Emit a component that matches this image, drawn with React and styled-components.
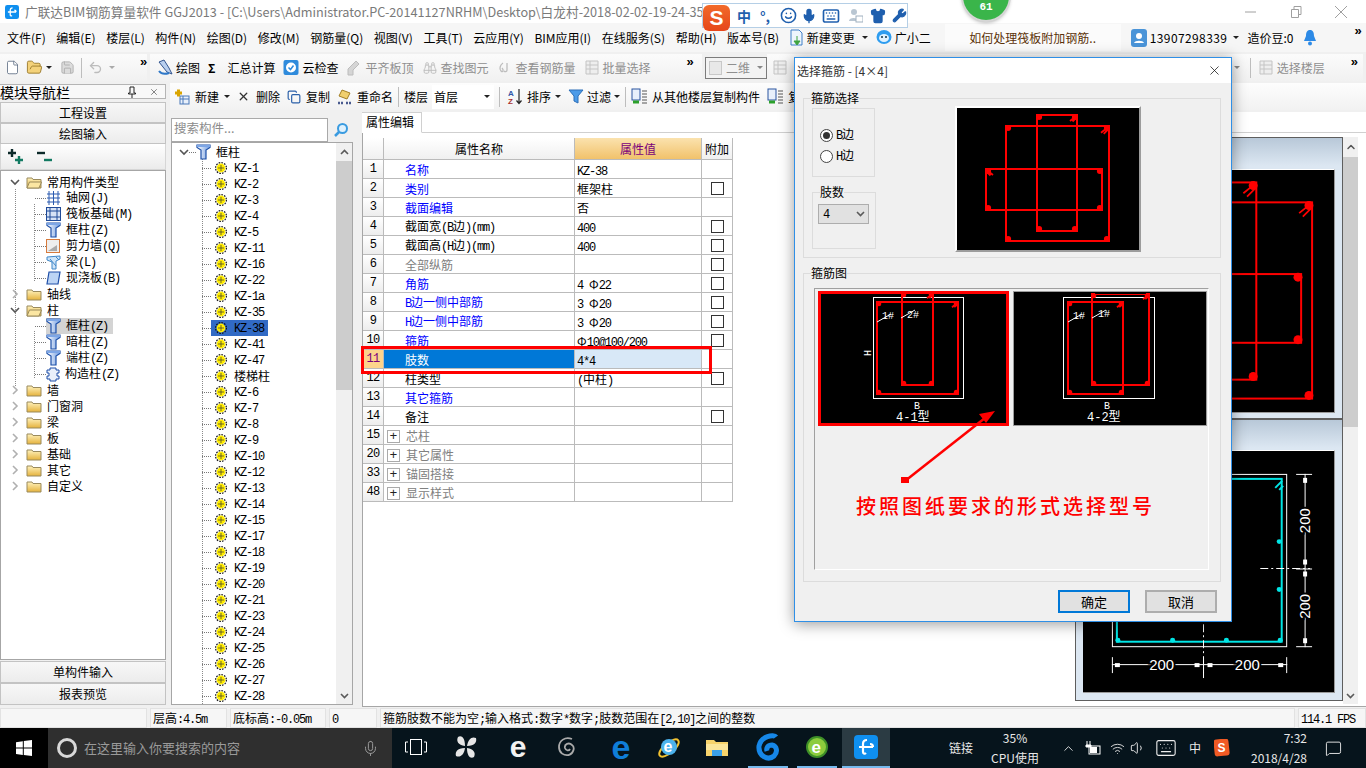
import React from "react";
import styled, { createGlobalStyle } from "styled-components";
import { Binoculars, Copy, File, FolderOpen, Mic, Save, Undo2, Wifi, Volume1, X, Keyboard, Wrench, Shirt, Smile, ChevronUp, MessageSquare } from "lucide-react";

const GlobalStyle = createGlobalStyle`
  html, body { margin: 0; padding: 0; background: #f0f0f0; }
  * { box-sizing: border-box; }
  svg { flex: none; }
`;

const CJK = `"Noto Sans CJK SC", "Liberation Sans", sans-serif`;

const Root = styled.div`
  position: relative;
  width: 1366px;
  height: 768px;
  overflow: hidden;
  display: flex;
  flex-direction: column;
  background: #f0f0f0;
  font-family: ${CJK};
  font-size: 12px;
  line-height: 16px;
  color: #000;
`;

const Latin = styled.span`
  font-family: "Liberation Mono", monospace;
  font-size: 12px;
  letter-spacing: -1.2px;
`;

// SimSun-like mixed text: ascii runs go in the mono face
const sim = (s) => s.split(/([\x20-\x7e]+)/).map((p, i) => (i % 2 ? <Latin key={i}>{p}</Latin> : p));

/* ---------- window chrome ---------- */
const TitleBar = styled.div`
  height: 23px;
  background: #fff;
  display: flex;
  align-items: center;
  padding-left: 5px;
  gap: 6px;
  color: #7a7a7a;
  white-space: nowrap;
  overflow: hidden;
`;
const TitleText = styled.span`
  flex: 1;
  font-size: 12.7px;
`;
const WinBtns = styled.div`
  display: flex;
  align-items: center;
  width: 104px;
  margin-right: 18px;
  justify-content: space-between;
  flex: none;
  background: #fff;
`;
const MenuBar = styled.div`
  height: 29px;
  background: #f6f6f6;
  display: flex;
  align-items: center;
  padding-left: 7px;
  white-space: nowrap;
`;
const Menu = styled.span`
  margin-right: ${(p) => p.$mr ?? 10.6}px;
  display: inline-flex;
  align-items: center;
  gap: 3px;
`;
const Phone = styled.span`
  letter-spacing: 0.4px;
`;
const Notice = styled.div`
  width: 176px;
  height: 27px;
  margin: 0 10px 0 -1px;
  background: #fbfbfb;
  color: #5b3208;
  text-align: center;
  line-height: 27px;
  flex: none;
`;
const TopRow = styled.div`
  height: 31px;
  display: flex;
  align-items: center;
  background: #f0f0f0;
  white-space: nowrap;
  overflow: hidden;
`;
const Strip = styled.div`
  display: flex;
  align-items: center;
  height: 27px;
  gap: ${(p) => p.$gap ?? 8}px;
  padding-left: ${(p) => p.$pl ?? 4}px;
  padding-right: ${(p) => p.$pr ?? 0}px;
  width: ${(p) => p.$w}px;
  flex: ${(p) => (p.$w ? "none" : 1)};
  background: linear-gradient(#fbfbfb, #f1f1f1);
  margin-right: 3px;
`;
const Spacer = styled.i`
  flex: 1;
`;
const Tool = styled.span`
  display: inline-flex;
  align-items: center;
  gap: ${(p) => p.$gap ?? 3}px;
  color: ${(p) => (p.$off ? "#8f8f8f" : "#000")};
  flex: none;
`;
const IconSlot = styled.span`
  width: 16px;
  display: inline-flex;
  justify-content: center;
  flex: none;
`;
const Caret = styled.i`
  display: inline-block;
  width: 0;
  height: 0;
  border: 3px solid transparent;
  border-top: 3px solid ${(p) => p.$c ?? "#222"};
  border-bottom: 0;
  margin: 0 ${(p) => p.$m ?? 2}px;
`;
const More = styled.span`
  font-family: "Liberation Sans", sans-serif;
  font-weight: 700;
  font-size: 13px;
  line-height: 10px;
  margin-left: ${(p) => p.$ml ?? 0}px;
  align-self: flex-start;
  margin-top: 3px;
`;
const Sep = styled.i`
  width: 1px;
  height: 20px;
  background: #bdbdbd;
  flex: none;
  margin: 0 ${(p) => p.$m ?? 0}px;
`;
const ViewSelect = styled.div`
  width: 62px;
  height: 22px;
  border: 1px solid #7c7c7c;
  display: flex;
  align-items: center;
  gap: 4px;
  padding-left: 3px;
  color: #8f8f8f;
  flex: none;
  background: #f3f3f3;
`;
const ViewSwatch = styled.i`
  width: 14px;
  height: 14px;
  border: 1px solid #c8c8c8;
  background: #e8e8e8;
`;

/* ---------- body ---------- */
const Body = styled.div`
  height: 624px;
  display: flex;
`;
const Sidebar = styled.div`
  width: 170px;
  flex: none;
  display: flex;
  flex-direction: column;
  padding: 1px 4px 2px 0;
`;
const NavHead = styled.div`
  height: 15px;
  border: 1px solid #b4b4b4;
  border-left: 0;
  display: flex;
  align-items: center;
  justify-content: space-between;
  padding-right: 6px;
  font-size: 14px;
  line-height: 14px;
  background: #f8f8f8;
  margin-bottom: 3px;
`;
const NavPins = styled.span`
  display: flex;
  align-items: center;
  gap: 13px;
  color: #222;
`;
const NavBtn = styled.div`
  height: ${(p) => p.$h ?? 21}px;
  border: 1px solid #c3c3c3;
  background: linear-gradient(#f7f7f7, #ececec);
  text-align: center;
  line-height: 20px;
  flex: none;
`;
const NavTools = styled.div`
  height: 26px;
  flex: none;
  display: flex;
  align-items: center;
  gap: 12px;
  padding-left: 6px;
  background: linear-gradient(#fff, #ebebeb);
  border: 1px solid #d6d6d6;
  border-top: 0;
`;

const dotted = (x, top, h) =>
  `repeating-linear-gradient(to bottom, #8a8a8a 0 1px, transparent 1px 2px) ${x}px ${top}px / 1px ${h}px no-repeat`;

const TreeBox = styled.div`
  flex: 1;
  background: ${dotted(14, 18, 198)}, ${dotted(33, 33, 78)}, ${dotted(33, 160, 48)}, #fff;
  border: 1px solid #a6a6a6;
  padding-top: 3px;
  margin-bottom: 1px;
  overflow: hidden;
`;
const TreeRow = styled.div`
  height: ${(p) => p.$h ?? 16}px;
  display: flex;
  align-items: center;
  white-space: nowrap;
  padding-left: ${(p) => p.$pl ?? 0}px;
`;
const Dash = styled.i`
  width: ${(p) => p.$w ?? 11}px;
  border-top: 1px dotted #777;
  flex: none;
`;
const Gap = styled.i`
  width: ${(p) => p.$w}px;
  flex: none;
`;
const TreeLabel = styled.span`
  margin-left: ${(p) => p.$ml ?? 5}px;
  line-height: 16px;
`;
const GroupSel = styled.span`
  display: inline-flex;
  align-items: center;
  height: 16px;
  padding-right: 5px;
  background: ${(p) => (p.$on ? "#d4d4d4" : "transparent")};
`;
const KzSel = styled.span`
  display: inline-flex;
  align-items: center;
  height: 16px;
  padding: 0 4px;
  background: ${(p) => (p.$on ? "#316ac5" : "transparent")};
`;

const Workspace = styled.div`
  flex: 1;
  display: flex;
  flex-direction: column;
  min-width: 0;
`;
const ToolRow2 = styled.div`
  height: 27px;
  flex: none;
  display: flex;
  align-items: center;
  padding-left: 4px;
  gap: 7px;
  background: linear-gradient(#fdfdfd, #f2f2f2);
  white-space: nowrap;
  overflow: hidden;
`;
const FloorSelect = styled.div`
  width: 62px;
  height: 24px;
  margin-left: -3px;
  background: #fff;
  display: flex;
  align-items: center;
  justify-content: space-between;
  padding: 0 2px 0 2px;
  flex: none;
`;
const Panes = styled.div`
  flex: 1;
  display: flex;
  min-height: 0;
`;
const CompPane = styled.div`
  width: 192px;
  flex: none;
  padding: 7px 9px 2px 1px;
  display: flex;
  flex-direction: column;
`;
const SearchRow = styled.div`
  height: 25px;
  flex: none;
  display: flex;
  align-items: center;
  gap: 5px;
`;
const SearchInput = styled.div`
  width: 157px;
  height: 24px;
  background: #fff;
  border: 1px solid #a9a9a9;
  color: #8c8c8c;
  padding-left: 2px;
  line-height: 17px;
  font-size: 12.5px;
`;
const CompList = styled.div`
  flex: 1;
  min-height: 0;
  display: flex;
  background: ${dotted(30, 16, 550)}, #fff;
  border: 1px solid #a6a6a6;
  overflow: hidden;
`;
const CompRows = styled.div`
  flex: 1;
  padding-top: 1px;
  overflow: hidden;
`;
const Scrollbar = styled.div`
  width: ${(p) => p.$w ?? 15}px;
  flex: none;
  display: flex;
  flex-direction: column;
  background: #f0f0f0;
`;
const ScrollEnd = styled.div`
  height: ${(p) => p.$h ?? 17}px;
  flex: none;
  display: flex;
  align-items: center;
  justify-content: center;
  color: #555;
`;
const ScrollThumb = styled.div`
  height: ${(p) => p.$h}px;
  flex: none;
  background: #cdcdcd;
`;
const ScrollTrack = styled.div`
  flex: 1;
`;

const PropPane = styled.div`
  flex: 1;
  min-width: 0;
  display: flex;
  flex-direction: column;
  padding-top: 2px;
`;
const TabRow = styled.div`
  height: 21px;
  flex: none;
  background: #fff;
  border-bottom: 1px solid #d0d0d0;
`;
const Tab = styled.div`
  width: 60px;
  height: 21px;
  background: #fff;
  border: 1px solid #d0d0d0;
  border-bottom: 1px solid #fff;
  border-left: 0;
  padding-left: 4px;
  line-height: 17px;
`;
const PropBody = styled.div`
  flex: 1;
  min-height: 0;
  display: flex;
  background: #fff;
  padding: 4px 8px 2px 0;
  border-left: 1px solid #a6a6a6;
  border-bottom: 1px solid #a6a6a6;
`;
const TableArea = styled.div`
  flex: 1;
  min-width: 0;
`;
const Table = styled.div`
  display: grid;
  width: 370px;
  margin-top: 1px;
  grid-template-columns: 21px 191px 127px 31px;
  grid-template-rows: 22px;
  grid-auto-rows: 19px;
`;
const HeadCell = styled.div`
  text-align: center;
  line-height: 21px;
  background: ${(p) => (p.$hot ? "linear-gradient(#fbe2ae, #f1c26b)" : "linear-gradient(#ffffff, #f0f0f0)")};
  color: ${(p) => (p.$hot ? "#7b007b" : "#000")};
  border-right: 1px solid #bbb;
  border-bottom: 1px solid #bbb;
`;
const NumCell = styled.div`
  text-align: center;
  font-family: "Liberation Mono", monospace;
  font-size: 12px;
  letter-spacing: -0.8px;
  line-height: 18px;
  background: ${(p) => (p.$sel ? "#fdd48c" : "linear-gradient(#fff, #ededed)")};
  color: ${(p) => (p.$sel ? "#7b007b" : "#000")};
  border-right: 1px solid #bbb;
  border-bottom: 1px solid #bbb;
`;
const NameCell = styled.div`
  padding: 2px 0 0 ${(p) => (p.$plus ? 3 : 21)}px;
  display: flex;
  align-items: center;
  gap: 6px;
  background: ${(p) => (p.$sel ? "#0078d7" : "#fff")};
  color: ${(p) => (p.$sel ? "#fff" : p.$c)};
  border-right: 1px solid #bbb;
  border-bottom: 1px solid #bbb;
  white-space: nowrap;
`;
const ValueCell = styled.div`
  padding-left: 2px;
  line-height: 19px;
  background: ${(p) => (p.$sel ? "#d8e8f7" : "#fff")};
  border-right: 1px solid #bbb;
  border-bottom: 1px solid #bbb;
  white-space: nowrap;
  overflow: hidden;
`;
const ExtraCell = styled.div`
  display: flex;
  align-items: center;
  justify-content: center;
  border-right: 1px solid #bbb;
  border-bottom: 1px solid #bbb;
`;
const CheckBox = styled.i`
  width: 13px;
  height: 13px;
  border: 1px solid #333;
  background: #fff;
`;
const PlusBox = styled.i`
  width: 13px;
  height: 13px;
  border: 1px solid #aaa;
  display: flex;
  align-items: center;
  justify-content: center;
  font-style: normal;
  font-family: "Liberation Mono", monospace;
  font-size: 13px;
  line-height: 11px;
  color: #222;
  flex: none;
`;
const Previews = styled.div`
  width: 268px;
  flex: none;
  display: flex;
  flex-direction: column;
`;
const Preview = styled.div`
  height: ${(p) => p.$h}px;
  flex: none;
  border: 1px solid #5e5e5e;
  background: linear-gradient(#b8c8d8 0, #dce7f2 28px, #dce7f2 100%);
  padding: ${(p) => p.$t}px 7px 0 7px;
`;
const Canvas = styled.div`
  width: 252px;
  height: ${(p) => p.$h}px;
  background: #000;
  border-top: 1px solid #fff;
  border-bottom: 1px solid #999;
  border-right: 1px solid #999;
`;
const Draw = styled.svg`
  display: block;
  width: 100%;
  height: 100%;
`;

/* ---------- status + taskbar ---------- */
const StatusBar = styled.div`
  height: 21px;
  flex: none;
  display: flex;
  gap: 3px;
  padding-top: 1px;
`;
const StatusCell = styled.div`
  width: ${(p) => p.$w}px;
  flex: ${(p) => (p.$w ? "none" : 1)};
  height: 20px;
  padding-left: 2px;
  background: #f6f6f6;
  border: 1px solid #e2e2e2;
  line-height: 18px;
  white-space: nowrap;
  overflow: hidden;
`;
const Taskbar = styled.div`
  height: 40px;
  flex: none;
  background: #06141c;
  display: flex;
  align-items: center;
  color: #e8e8e8;
  white-space: nowrap;
`;
const StartBtn = styled.div`
  width: 48px;
  height: 40px;
  background: #000;
  display: flex;
  align-items: center;
  justify-content: center;
  flex: none;
`;
const SearchBox = styled.div`
  width: 344px;
  height: 40px;
  background: #2f2f2f;
  display: flex;
  align-items: center;
  color: #9a9a9a;
  padding: 0 13px 0 9px;
  font-size: 13px;
  flex: none;
`;
const Cortana = styled.i`
  width: 20px;
  height: 20px;
  border: 3px solid #d8d8d8;
  border-radius: 50%;
  margin-right: 7px;
`;
const SearchHint = styled.span`
  flex: 1;
`;
const TaskIcons = styled.div`
  display: flex;
  align-items: center;
  height: 40px;
`;
const TaskApp = styled.div`
  width: ${(p) => p.$w}px;
  margin-right: ${(p) => p.$mr ?? 0}px;
  height: 40px;
  flex: none;
  display: flex;
  align-items: center;
  justify-content: center;
  background: ${(p) => (p.$active ? "#2b3b43" : "transparent")};
  border-bottom: 2px solid ${(p) => (p.$run ? "#76b9ed" : "transparent")};
`;
const EGlyph = styled.span`
  font-family: "Liberation Sans", sans-serif;
  font-weight: 700;
  font-size: ${(p) => p.$s ?? 24}px;
  line-height: 24px;
  color: ${(p) => p.$c};
`;
const Tray = styled.div`
  flex: 1;
  display: flex;
  align-items: center;
  font-size: 12px;
  padding-left: 59px;
`;
const CpuBox = styled.div`
  width: 50px;
  margin: 0 17px 0 17px;
  text-align: center;
  line-height: 20px;
  font-size: 12px;
`;
const TrayIcon = styled.span`
  width: ${(p) => p.$w}px;
  display: flex;
  justify-content: center;
  flex: none;
`;
const Clock = styled.div`
  width: 62px;
  margin-left: 8px;
  text-align: right;
  line-height: 20px;
  font-size: 12px;
`;

/* ---------- overlays ---------- */
const ImeBar = styled.div`
  position: absolute;
  left: 702px;
  top: 3px;
  width: 206px;
  height: 25px;
  background: #fff;
  border: 1px solid #b5cfe6;
  display: flex;
  align-items: center;
  padding-left: 32px;
  color: #1f5fae;
`;
const ImeItem = styled.span`
  width: ${(p) => p.$w}px;
  display: flex;
  justify-content: center;
  flex: none;
`;
const ImeLogo = styled.div`
  position: absolute;
  left: 0;
  top: 1px;
  width: 27px;
  height: 26px;
  border-radius: 6px;
  background: linear-gradient(#f26a2a, #e6471a);
  color: #fff;
  font: 700 21px/25px "Liberation Sans", sans-serif;
  text-align: center;
`;
const ImeZh = styled.b`
  font-size: 14px;
  color: #1f5fae;
`;
const Badge = styled.div`
  position: absolute;
  left: 963px;
  top: -28px;
  width: 46px;
  height: 48px;
  border-radius: 50%;
  background: #3ab54a;
  box-shadow: 0 0 0 2px #d6d6d6, 0 2px 4px rgba(0, 0, 0, 0.4);
  color: #fff;
  font: 700 11px/14px "Liberation Mono", monospace;
  text-align: center;
  padding-top: 28px;
`;
const RedMark = styled.div`
  position: absolute;
  left: 361px;
  top: 346px;
  width: 351px;
  height: 28px;
  border: 3px solid #f00;
  z-index: 2;
`;

/* ---------- dialog ---------- */
const Dialog = styled.div`
  position: absolute;
  left: 794px;
  top: 57px;
  width: 438px;
  height: 565px;
  background: #f0f0f0;
  border: 1px solid #2f8fe6;
  box-shadow: 0 2px 14px rgba(0, 0, 0, 0.4);
  z-index: 3;
  display: flex;
  flex-direction: column;
`;
const DlgTitle = styled.div`
  height: 25px;
  flex: none;
  background: #fff;
  display: flex;
  align-items: center;
  justify-content: space-between;
  padding: 0 9px 0 2px;
  color: #333;
`;
const DlgBody = styled.div`
  padding: 7px 10px 0 8px;
  flex: 1;
  display: flex;
  flex-direction: column;
`;
const Group = styled.fieldset`
  margin: ${(p) => p.$mt ?? 0}px 0 0 0;
  padding: 0;
  width: ${(p) => p.$w}px;
  height: ${(p) => p.$h}px;
  border: 1px solid #dcdcdc;
  flex: none;
  min-width: 0;
`;
const Legend = styled.legend`
  padding: 0;
  margin-left: 7px;
  line-height: 16px;
  height: 16px;
`;
const SelectRow = styled.div`
  display: flex;
  padding: 2px 0 0 8px;
`;
const LeftCol = styled.div`
  width: 63px;
  flex: none;
  display: flex;
  flex-direction: column;
`;
const RadioBox = styled.div`
  width: 63px;
  height: 69px;
  border: 1px solid #dcdcdc;
  padding: 18px 0 0 7px;
  display: flex;
  flex-direction: column;
  gap: 5px;
`;
const Radio = styled.label`
  display: flex;
  align-items: center;
  gap: 3px;
  height: 16px;
`;
const RadioDot = styled.i`
  width: 13px;
  height: 13px;
  border-radius: 50%;
  border: 1px solid #444;
  background: #fff;
  display: flex;
  align-items: center;
  justify-content: center;
  &::after {
    content: "";
    width: 7px;
    height: 7px;
    border-radius: 50%;
    background: ${(p) => (p.$on ? "#333" : "transparent")};
  }
`;
const LimbSelect = styled.div`
  width: 51px;
  height: 20px;
  margin: 4px 0 0 5px;
  background: #e1e1e1;
  border: 1px solid #adadad;
  display: flex;
  align-items: center;
  justify-content: space-between;
  padding: 0 3px 0 4px;
`;
const StirrupPreview = styled.div`
  width: 186px;
  height: 146px;
  margin: -2px 0 0 80px;
  background: #000;
  border-top: 2px solid #fff;
  border-left: 2px solid #fff;
  border-right: 2px solid #9c9c9c;
  border-bottom: 2px solid #9c9c9c;
  overflow: hidden;
`;
const Sunken = styled.div`
  position: relative;
  width: 395px;
  height: 282px;
  margin: 7px 0 0 10px;
  border: 1px solid;
  border-color: #a0a0a0 #fff #fff #a0a0a0;
`;
const Thumbs = styled.div`
  display: flex;
  gap: 4px;
  padding: 2px 0 0 3px;
`;
const Thumb = styled.div`
  width: ${(p) => p.$w}px;
  height: 135px;
  background: #000;
  outline: ${(p) => (p.$sel ? "3px solid #f00" : "1px solid #9c9c9c")};
  outline-offset: ${(p) => (p.$sel ? -3 : -1)}px;
`;
const Instruction = styled.div`
  margin: 68px 0 0 41px;
  color: #f00;
  font-size: 20px;
  line-height: 24px;
  letter-spacing: 3px;
  font-weight: 500;
  white-space: nowrap;
`;
const ArrowLayer = styled.svg`
  position: absolute;
  left: 0;
  top: 0;
  pointer-events: none;
`;
const DlgFoot = styled.div`
  display: flex;
  justify-content: flex-end;
  gap: 15px;
  padding: 8px 4px 0 0;
`;
const DlgBtn = styled.div`
  width: 72px;
  height: 23px;
  background: #e1e1e1;
  border: ${(p) => (p.$primary ? "2px solid #0078d7" : "2px solid #adadad")};
  text-align: center;
  line-height: 19px;
  font-size: 13px;
`;

/* ---------- icons ---------- */
const Column = ({ c = "#1b4fa8" }) => (
  <svg width="15" height="16" viewBox="0 0 15 16">
    <defs>
      <linearGradient id="colg" x1="0" x2="1">
        <stop offset="0" stopColor="#fff" />
        <stop offset="1" stopColor="#6f9be0" />
      </linearGradient>
    </defs>
    <path d="M1 1h13v2.5L10 6v9H5V6L1 3.5z" fill="url(#colg)" stroke={c} strokeWidth="1.2" />
    <path d="M1 2h13" stroke="#7da6e6" strokeWidth="2" />
  </svg>
);
const Gear = () => (
  <svg width="12" height="12" viewBox="0 0 12 12">
    <circle cx="6" cy="6" r="5.4" fill="none" stroke="#111" strokeWidth="1.2" strokeDasharray="1.6 1.2" />
    <circle cx="6" cy="6" r="4.4" fill="#ffec00" />
    <path d="M3 6h6M6 3v6" stroke="#333" strokeWidth="0.7" />
  </svg>
);
const Folder = ({ open }) => (
  <svg width="16" height="13" viewBox="0 0 16 13">
    <defs>
      <linearGradient id="fold" x1="0" x2="0" y1="0" y2="1">
        <stop offset="0" stopColor="#fff2bd" />
        <stop offset="1" stopColor="#e5b23c" />
      </linearGradient>
    </defs>
    <path d="M1 2h5l1 1.5h8V12H1z" fill="url(#fold)" stroke="#9a8a5c" />
    {open && <path d="M1 12l2.5-6H15.500L13 12z" fill="#fbe6a2" stroke="#9a8a5c" />}
  </svg>
);
const Chevron = ({ open }) => (
  <svg width="10" height="10" viewBox="0 0 10 10">
    <path d={open ? "M1 3l4 4 4-4" : "M3 1l4 4-4 4"} fill="none" stroke={open ? "#555" : "#b0b0b0"} strokeWidth="1.6" />
  </svg>
);
const SmallChev = ({ down }) => (
  <svg width="9" height="6" viewBox="0 0 9 6">
    <path d={down ? "M1 1l3.5 3.5L8 1" : "M1 5l3.5-3.5L8 5"} fill="none" stroke="#5a5a5a" strokeWidth="1.6" />
  </svg>
);
const GridIcon = () => (
  <svg width="15" height="14" viewBox="0 0 15 14">
    <path d="M1 3h13M1 7h13M1 11h13M3 0v14M7.500 0v14M12 0v14" stroke="#2a5bb0" fill="none" />
  </svg>
);
const RaftIcon = () => (
  <svg width="15" height="14" viewBox="0 0 15 14">
    <rect x="0.500" y="0.500" width="14" height="13" fill="#d7e3f6" stroke="#1f4a98" />
    <path d="M1 4h13M1 10h13M4 1v12M11 1v12" stroke="#1f4a98" />
  </svg>
);
const WallIcon = () => (
  <svg width="15" height="14" viewBox="0 0 15 14">
    <rect x="0.500" y="0.500" width="13" height="13" fill="#eee" stroke="#d67a3c" />
    <path d="M2 12l9-6v6z" fill="#aaa" />
  </svg>
);
const BeamIcon = () => (
  <svg width="15" height="15" viewBox="0 0 15 15">
    <path d="M1 2l13-1v3l-4 2v8H6V7L1 5z" fill="#cfe4f7" stroke="#3f87c9" />
    <path d="M4 4l6 7M10 2l3 3" stroke="#3f87c9" />
  </svg>
);
const SlabIcon = () => (
  <svg width="15" height="14" viewBox="0 0 15 14">
    <path d="M3 1h11l-2 12H1z" fill="#bcd4f4" stroke="#1f4fa8" strokeWidth="1.2" />
  </svg>
);
const ConstrIcon = () => (
  <svg width="14" height="15" viewBox="0 0 14 15">
    <path d="M4 1h6v2h3v3h-2v3h2v3h-3v2H4v-2H1V9h2V6H1V3h3z" fill="#e9f0fb" stroke="#1f4fa8" />
  </svg>
);
const Plus2 = ({ minus }) => (
  <svg width="17" height="15" viewBox="0 0 17 15">
    <path d={minus ? "M1 4h8" : "M1 4h8M5 0v8"} stroke="#0d2a2a" strokeWidth="2.4" />
    <path d={minus ? "M8 11h8" : "M8 11h8M12 7v8"} stroke="#127a62" strokeWidth="2.4" />
  </svg>
);
const Magnifier = () => (
  <svg width="16" height="16" viewBox="0 0 16 16">
    <circle cx="9.500" cy="6.500" r="4.500" fill="#dff1fd" stroke="#3a9be0" strokeWidth="2" />
    <path d="M6 10l-4 4" stroke="#3a9be0" strokeWidth="2.500" />
  </svg>
);
const CloudCheck = () => (
  <svg width="16" height="15" viewBox="0 0 16 15">
    <rect x="0.500" width="15" height="15" rx="2" fill="#2f8bdc" />
    <circle cx="8" cy="7.500" r="5" fill="#fff" />
    <path d="M5.500 7.500l2 2 3-4" fill="none" stroke="#2f8bdc" strokeWidth="1.500" />
  </svg>
);
const DrawIcon = () => (
  <svg width="16" height="17" viewBox="0 0 16 17">
    <path d="M2 3l5-2 5 8 3 6-5-2z" fill="#b9cfee" stroke="#33558f" />
    <path d="M2 12c3 4 7 3 10 2" fill="none" stroke="#2f78c8" strokeWidth="2" />
  </svg>
);
const GreyBlock = () => (
  <svg width="14" height="16" viewBox="0 0 14 16">
    <path d="M1 9l8-8 3 3-6 6v5H1z" fill="#d5d5d5" stroke="#bcbcbc" />
  </svg>
);
const GreyBatch = () => (
  <svg width="14" height="15" viewBox="0 0 14 15">
    <path d="M1 1h12v13H1zM1 5h12M1 9h12M5 1v13" fill="#eee" stroke="#c4c4c4" />
  </svg>
);
const GreyHook = () => (
  <svg width="13" height="11" viewBox="0 0 13 11">
    <path d="M5 1C2 3 1 7 3 9s3-1 1-3M9 1v7c0 2-2 2-3 1" fill="none" stroke="#bdbdbd" strokeWidth="1.300" />
  </svg>
);
const NewIcon = () => (
  <svg width="16" height="16" viewBox="0 0 16 16">
    <rect x="6" y="7" width="9" height="8" fill="#e8f0fb" stroke="#4a78b8" />
    <path d="M6 10h9M9 7v8" stroke="#4a78b8" />
    <path d="M1 4h7M4.500 .500v7" stroke="#d9a400" strokeWidth="3" />
  </svg>
);
const RenameIcon = () => (
  <svg width="16" height="16" viewBox="0 0 16 16">
    <path d="M5 1l8 3-3 6-8-3z" fill="#f0cf6e" stroke="#a37f25" />
    <path d="M1 14h6M9 14h6" stroke="#4a5b8f" strokeWidth="2.500" strokeDasharray="2 1" />
  </svg>
);
const SortIcon = () => (
  <svg width="18" height="17" viewBox="0 0 18 17">
    <text x="3" y="8" fontSize="8" fontFamily="Liberation Sans" fontWeight="700" fill="#2f57a8">A</text>
    <text x="3" y="16" fontSize="8" fontFamily="Liberation Sans" fontWeight="700" fill="#a8322f">Z</text>
    <path d="M14 1v14M11.500 12.500l2.500 3 2.500-3" fill="none" stroke="#222" strokeWidth="1.200" />
  </svg>
);
const FunnelIcon = () => (
  <svg width="16" height="15" viewBox="0 0 16 15">
    <path d="M1 1h14L10 7v7L6 12V7z" fill="#4c9be8" stroke="#2d6fb8" />
  </svg>
);
const CopyFromIcon = () => (
  <svg width="17" height="17" viewBox="0 0 17 17">
    <rect x="1" y="1" width="8" height="11" fill="#e8f0fb" stroke="#2a55a0" />
    <path d="M2 14h6" stroke="#2ca02c" strokeWidth="3" />
    <path d="M11 3h5M11 6h5M11 9h5M11 12h5M11 15h5" stroke="#555" />
  </svg>
);
const DocArrow = () => (
  <svg width="14" height="17" viewBox="0 0 14 17">
    <path d="M1 1h8l3 3v12H1z" fill="#eef5fd" stroke="#3f7fc8" />
    <path d="M7 7v5M4 12h6l-3 4z" fill="#3fa33f" stroke="#3fa33f" />
  </svg>
);
const Mascot = () => (
  <svg width="16" height="17" viewBox="0 0 16 17">
    <ellipse cx="8" cy="8" rx="7.500" ry="7" fill="#2e9df0" />
    <ellipse cx="8" cy="9" rx="5" ry="4" fill="#dff2ff" />
    <circle cx="6" cy="8" r="1" fill="#134" />
    <circle cx="10" cy="8" r="1" fill="#134" />
  </svg>
);
const UserBadge = () => (
  <svg width="16" height="18" viewBox="0 0 16 18">
    <rect width="16" height="18" rx="3" fill="#4a94d8" />
    <circle cx="8" cy="7" r="3" fill="#fff" />
    <path d="M3 14c1-3 9-3 10 0z" fill="#fff" />
  </svg>
);
const Bell = () => (
  <svg width="14" height="17" viewBox="0 0 14 17">
    <path d="M7 1c3 0 4 2.500 4 6l2 5H1l2-5c0-3.500 1-6 4-6z" fill="#2d8ae6" />
    <circle cx="7" cy="14.500" r="2" fill="#2d8ae6" />
  </svg>
);
const AppBlue = ({ size = 24 }) => (
  <svg width={size} height={size} viewBox="0 0 24 24">
    <rect width="24" height="24" rx="4" fill="#0f8fef" />
    <path d="M13 5c-3 0-4 2-4 4v8c0 2 2 2 3 1M5 12h14M16 9c2 0 3 1 3 3" fill="none" stroke="#fff" strokeWidth="2.200" />
  </svg>
);
const WinLogo = () => (
  <svg width="16" height="16" viewBox="0 0 16 16">
    <path d="M0 2.200l6.800-1v6.400H0zM7.800 1l8.200-1v7.600H7.800zM0 8.500h6.800v6.400L0 14zM7.800 8.500H16V16l-8.200-1.100z" fill="#fff" />
  </svg>
);
const TaskView = () => (
  <svg width="22" height="16" viewBox="0 0 22 16">
    <rect x="5.500" y="0.500" width="11" height="15" fill="none" stroke="#fff" />
    <path d="M3 3H.500v10H3M19 3h2.500v10H19" fill="none" stroke="#fff" />
  </svg>
);
const FanApp = () => (
  <svg width="22" height="24" viewBox="0 0 22 24">
    <path d="M10 11C3 10 1 6 3 2c3-2 7 0 7 9zM12 11c1-7 5-10 9-8 1 4-1 8-9 8zM12 13c7 1 9 5 7 9-3 2-7 0-7-9zM10 13c-1 7-5 10-9 8-1-4 1-8 9-8z" fill="#e6e6e6" />
  </svg>
);
const SpiralApp = () => (
  <svg width="20" height="22" viewBox="0 0 20 22">
    <path d="M15 3C8 0 2 5 2 11c0 6 5 9 10 8 5-2 6-8 3-10-3-3-8-1-7 3 1 3 4 3 5 1" fill="none" stroke="#aaa" strokeWidth="1.800" />
  </svg>
);
const IeApp = () => (
  <svg width="26" height="26" viewBox="0 0 26 26">
    <ellipse cx="13" cy="14" rx="12" ry="5" transform="rotate(-40 13 14)" fill="none" stroke="#f2c230" strokeWidth="2" />
    <circle cx="13" cy="13" r="8" fill="#4bb2ec" />
    <text x="7.500" y="18" fontSize="16" fontFamily="Liberation Sans" fontWeight="700" fill="#fff">e</text>
  </svg>
);
const FolderApp = () => (
  <svg width="22" height="18" viewBox="0 0 22 18">
    <path d="M0 2h8l2 2h12v14H0z" fill="#f6d36b" />
    <rect y="6" width="22" height="6" fill="#fbe69a" />
    <rect x="6" y="12" width="10" height="6" fill="#3aa0e8" />
  </svg>
);
const GApp = () => (
  <svg width="24" height="28" viewBox="0 0 24 28">
    <path d="M20 4c-2-3-15-1-17 9-1 10 9 15 15 10 4-4 3-10-2-11-4 0-6 3-5 6" fill="none" stroke="#1687e8" strokeWidth="5" />
  </svg>
);
const GreenApp = () => (
  <svg width="24" height="28" viewBox="0 0 24 28">
    <circle cx="12" cy="14" r="10" fill="#8ccc3c" stroke="#3d8f28" strokeWidth="2" />
    <text x="6.500" y="20" fontSize="17" fontFamily="Liberation Sans" fontWeight="700" fill="#fff">e</text>
  </svg>
);
const BatteryPlug = () => (
  <svg width="16" height="14" viewBox="0 0 16 14">
    <rect x="4" y="5" width="11" height="8" fill="none" stroke="#fff" />
    <rect x="5" y="6" width="7" height="6" fill="#fff" />
    <path d="M2 0v4M5 0v4M1 4h5v2H1z" stroke="#fff" fill="#fff" />
  </svg>
);
const SogouTray = () => (
  <svg width="16" height="18" viewBox="0 0 16 18">
    <rect width="15" height="17" rx="3" fill="#f15a24" transform="rotate(-6 7 8)" />
    <text x="3.500" y="13" fontSize="12" fontFamily="Liberation Sans" fontWeight="700" fill="#fff">S</text>
  </svg>
);
const WinGlyph = ({ kind }) => (
  <svg width="14" height="14" viewBox="0 0 14 14">
    {kind === "min" && <path d="M1 7h11" stroke="#a0a0a0" />}
    {kind === "max" && <path d="M2.500 4.500h7v8h-7zM5 4V1.500h7v8h-2" fill="none" stroke="#a0a0a0" />}
    {kind === "close" && <path d="M1 1l12 12M13 1L1 13" stroke="#a0a0a0" />}
  </svg>
);
const ImePerson = () => (
  <svg width="15" height="15" viewBox="0 0 15 15">
    <circle cx="6" cy="4" r="3" fill="#b9c6d2" />
    <path d="M1 13c0-4 9-4 9 0z" fill="#b9c6d2" />
    <rect x="8" y="8" width="7" height="6" fill="#fff" stroke="#9fb0bf" />
  </svg>
);
const PinIcon = () => (
  <svg width="8" height="12" viewBox="0 0 8 12">
    <path d="M2 1h4v6h1.500v1h-7V7H2zM4 8v4" stroke="#222" fill="none" />
  </svg>
);

// one closed rebar hoop with its corner bars and the 135deg hook
const Hoop = ({ x, y, w, h, sw = 2, r = 3, hook = "tr", color = "#f00", hk = 5, thinTop }) => {
  const hx = hook === "tr" ? x + w : x;
  const dir = hook === "tr" ? -1 : 1;
  const dots = [
    [x, y + h],
    [x + w, y + h],
    hook === "tr" ? [x, y] : [x + w, y],
    [hx, y],
  ];
  const inset = r * 0.7;
  return (
    <g fill={color} stroke="none">
      <rect x={x} y={y} width={w} height={h} fill="none" stroke={color} strokeWidth={sw} />
      {thinTop && <rect x={x + 3} y={y - 1} width={w - 6} height={1} fill="#000" />}
      {dots.map(([cx, cy], i) => (
        <circle key={i} cx={cx + (cx === x ? inset : -inset)} cy={cy + (cy === y ? inset : -inset)} r={r} />
      ))}
      <path
        d={`M${hx + dir * 2} ${y + 2}l${dir * hk} ${hk * 0.8}M${hx + dir * 0.5} ${y + hk * 0.5}l${dir * hk * 0.8} ${hk * 0.8}`}
        stroke={color}
        strokeWidth={sw * 0.9}
        fill="none"
      />
    </g>
  );
};

const SvgLabel = styled.text`
  font-family: "Liberation Mono", monospace;
  font-size: ${(p) => p.$s ?? 10}px;
  fill: #fff;
`;
const SvgCjk = styled.tspan`
  font-family: "Noto Sans CJK SC", sans-serif;
  font-size: 12px;
`;
const DimText = styled.text`
  font-family: "Liberation Sans", sans-serif;
  font-size: 15px;
  fill: #fff;
  stroke: #000;
  stroke-width: 4px;
  paint-order: stroke;
  text-anchor: middle;
`;

const FourBySection = () => (
  <Draw viewBox="957 108 182 142">
    <Hoop x={1006} y={126} w={103} h={115} hk={6} />
    <Hoop x={1037} y={115} w={40} h={116} hk={5} />
    <Hoop x={986} y={169} w={116} h={41} hook="tl" hk={5} />
  </Draw>
);

const LeaderMark = ({ x, y, len = 14 }) => (
  <path d={`M${x} ${y}l${len} -8`} stroke="#fff" strokeWidth="1" />
);

const ThumbOne = () => (
  <Draw viewBox="818 292 191 135">
    <rect x="873.500" y="298.500" width="90" height="101" fill="none" stroke="#fff" />
    <Hoop x={877} y={303} w={81} h={92} r={2.500} hk={4} />
    <Hoop x={902} y={294} w={31} h={92} r={2.500} hk={4} />
    <LeaderMark x={877} y={323} />
    <LeaderMark x={901} y={319} />
    <SvgLabel x="882" y="320">1#</SvgLabel>
    <SvgLabel x="907" y="319">2#</SvgLabel>
    <SvgLabel x="864" y="356" transform="rotate(-90 868 353)">H</SvgLabel>
    <SvgLabel x="914" y="410">B</SvgLabel>
    <SvgLabel x="896" y="422" $s={12}>4-1<SvgCjk>型</SvgCjk></SvgLabel>
  </Draw>
);
const ThumbTwo = () => (
  <Draw viewBox="1013 292 194 135">
    <rect x="1063.500" y="298.500" width="91" height="101" fill="none" stroke="#fff" />
    <Hoop x={1068} y={303} w={55} h={92} r={2.500} hk={4} />
    <Hoop x={1092} y={295} w={57} h={91} r={2.500} hk={4} thinTop />
    <LeaderMark x={1068} y={323} />
    <LeaderMark x={1092} y={319} />
    <SvgLabel x="1073" y="320">1#</SvgLabel>
    <SvgLabel x="1098" y="318">1#</SvgLabel>
    <SvgLabel x="1104" y="410">B</SvgLabel>
    <SvgLabel x="1087" y="422" $s={12}>4-2<SvgCjk>型</SvgCjk></SvgLabel>
  </Draw>
);

const MainSection = () => (
  <Draw viewBox="1083 169 252 242">
    <Hoop x={1138} y={201} w={175} h={197} sw={2} r={4.500} hk={11} />
    <Hoop x={1189} y={181} w={68} h={198} sw={2} r={4.500} hk={11} />
    <Hoop x={1105} y={273} w={197} h={69} sw={2} r={4.500} hook="tl" hk={11} />
  </Draw>
);

const DimDrawing = () => (
  <Draw viewBox="1083 451 252 242">
    <rect x="1112.500" y="474.500" width="175" height="173" fill="none" stroke="#fff" />
    <rect x="1117" y="479" width="165.500" height="163.500" fill="none" stroke="#00e5e5" strokeWidth="2" />
    <path d="M1276 488l7-7M1280 490l4-4" stroke="#00e5e5" strokeWidth="2" />
    <g fill="#00e5e5">
      {[[1118, 641], [1173, 641], [1227, 641], [1281, 641], [1280, 542], [1280, 590]].map(([cx, cy]) => (
        <circle key={cx + "-" + cy} cx={cx} cy={cy} r="2.500" />
      ))}
    </g>
    <path d="M1204 625v54M1261 569h50" stroke="#fff" strokeDasharray="8 3 2 3" />
    <path d="M1297 474.500h16M1297 569.500h16M1297 647.500h16M1306 474v174" stroke="#fff" />
    <path d="M1112.500 658v16M1204 658v16M1287.500 658v16M1112 665.500h176" stroke="#fff" />
    <g fill="#fff">
      <rect x="1304" y="478" width="4" height="5" />
      <rect x="1304" y="560" width="4" height="5" />
      <rect x="1304" y="572" width="4" height="5" />
      <rect x="1304" y="639" width="4" height="5" />
      <rect x="1115" y="664" width="5" height="4" />
      <rect x="1195" y="664" width="5" height="4" />
      <rect x="1208" y="664" width="5" height="4" />
      <rect x="1279" y="664" width="5" height="4" />
    </g>
    <DimText x="1162" y="671">200</DimText>
    <DimText x="1248" y="671">200</DimText>
    <DimText x="0" y="0" transform="translate(1311 521) rotate(-90)">200</DimText>
    <DimText x="0" y="0" transform="translate(1311 607) rotate(-90)">200</DimText>
  </Draw>
);

/* ---------- data ---------- */
const menus = ["文件(F)", "编辑(E)", "楼层(L)", "构件(N)", "绘图(D)", "修改(M)", "钢筋量(Q)", "视图(V)", "工具(T)", "云应用(Y)", "BIM应用(I)", "在线服务(S)", "帮助(H)", "版本号(B)"];

const kzNames = ["KZ-1", "KZ-2", "KZ-3", "KZ-4", "KZ-5", "KZ-11", "KZ-16", "KZ-22", "KZ-1a", "KZ-35", "KZ-38", "KZ-41", "KZ-47", "楼梯柱", "KZ-6", "KZ-7", "KZ-8", "KZ-9", "KZ-10", "KZ-12", "KZ-13", "KZ-14", "KZ-15", "KZ-17", "KZ-18", "KZ-19", "KZ-20", "KZ-21", "KZ-23", "KZ-24", "KZ-25", "KZ-26", "KZ-27", "KZ-28"];

const BLUE = "#0000ff";
const GREY = "#808080";
const rows = [
  { n: 1, name: "名称", c: BLUE, v: "KZ-38" },
  { n: 2, name: "类别", c: BLUE, v: "框架柱", chk: true },
  { n: 3, name: "截面编辑", c: BLUE, v: "否" },
  { n: 4, name: "截面宽(B边)(mm)", c: "#000", v: "400", chk: true },
  { n: 5, name: "截面高(H边)(mm)", c: "#000", v: "400", chk: true },
  { n: 6, name: "全部纵筋", c: GREY, v: "", chk: true },
  { n: 7, name: "角筋", c: BLUE, v: "4 Φ22", chk: true },
  { n: 8, name: "B边一侧中部筋", c: BLUE, v: "3 Φ20", chk: true },
  { n: 9, name: "H边一侧中部筋", c: BLUE, v: "3 Φ20", chk: true },
  { n: 10, name: "箍筋", c: BLUE, v: " Φ10@100/200", chk: true },
  { n: 11, name: "肢数", c: BLUE, v: "4*4", sel: true },
  { n: 12, name: "柱类型", c: "#000", v: "(中柱)", chk: true },
  { n: 13, name: "其它箍筋", c: BLUE, v: "" },
  { n: 14, name: "备注", c: "#000", v: "", chk: true },
  { n: 15, name: "芯柱", c: GREY, v: "", plus: true },
  { n: 20, name: "其它属性", c: GREY, v: "", plus: true },
  { n: 33, name: "锚固搭接", c: GREY, v: "", plus: true },
  { n: 48, name: "显示样式", c: GREY, v: "", plus: true },
];

const FolderRow = ({ name, open }) => (
  <TreeRow $pl={9}>
    <Chevron open={open} />
    <Gap $w={6} />
    <Folder open={open} />
    <TreeLabel>{name}</TreeLabel>
  </TreeRow>
);
const Leaf = ({ icon, name, on }) => (
  <TreeRow $pl={34}>
    <Dash />
    <GroupSel $on={on}>
      {icon}
      <TreeLabel>{sim(name)}</TreeLabel>
    </GroupSel>
  </TreeRow>
);

export default function App() {
  return (
    <Root>
      <GlobalStyle />
      <TitleBar>
        <AppBlue size={14} />
        <TitleText>广联达BIM钢筋算量软件 GGJ2013 - [C:\Users\Administrator.PC-20141127NRHM\Desktop\白龙村-2018-02-02-19-24-35</TitleText>
        <WinBtns>
          <WinGlyph kind="min" />
          <WinGlyph kind="max" />
          <WinGlyph kind="close" />
        </WinBtns>
      </TitleBar>

      <MenuBar>
        {menus.map((m) => (
          <Menu key={m}>{m}</Menu>
        ))}
        <Menu $mr={4}>
          <DocArrow />
          新建变更
          <Caret $m={4} />
        </Menu>
        <Menu $mr={15}>
          <Mascot />
          广小二
        </Menu>
        <Notice>如何处理筏板附加钢筋..</Notice>
        <Menu $mr={5}>
          <UserBadge />
          <Phone>13907298339</Phone>
          <Caret $m={3} />
        </Menu>
        <Menu $mr={10}>造价豆:0</Menu>
        <Bell />
        <More $ml={37}>»</More>
      </MenuBar>

      <TopRow>
        <Strip $w={147} $pl={5} $gap={6}>
          <File size={15} color="#5a6a80" fill="#fff" strokeWidth={1.3} />
          <Tool $gap={1}>
            <FolderOpen size={17} color="#9a7a2c" fill="#f4d27a" strokeWidth={1.3} />
            <Caret />
          </Tool>
          <Save size={15} color="#a8a8a8" fill="#dcdcdc" strokeWidth={1.3} />
          <Sep />
          <Tool $gap={4}>
            <Undo2 size={15} color="#bcbcbc" strokeWidth={2.2} />
            <Caret $c="#aaa" />
          </Tool>
          <More $ml={17}>»</More>
        </Strip>
        <Strip $w={552} $pl={7} $gap={8}>
          <Tool>
            <DrawIcon />
            绘图
          </Tool>
          <Tool $gap={12}>
            <b>Σ</b>
            汇总计算
          </Tool>
          <Tool>
            <CloudCheck />
            云检查
          </Tool>
          <Tool $off>
            <IconSlot><GreyBlock /></IconSlot>
            平齐板顶
          </Tool>
          <Tool $off>
            <IconSlot><Binoculars size={14} color="#bcbcbc" strokeWidth={1.6} /></IconSlot>
            查找图元
          </Tool>
          <Tool $off>
            <IconSlot><GreyHook /></IconSlot>
            查看钢筋量
          </Tool>
          <Tool $off>
            <IconSlot><GreyBatch /></IconSlot>
            批量选择
          </Tool>
          <More $ml={28}>»</More>
        </Strip>
        <ViewSelect>
          <ViewSwatch />
          二维
          <Caret $c="#888" $m={3} />
        </ViewSelect>
        <Strip $pl={6} $gap={8} $pr={5}>
          <GreyBatch />
          <Spacer />
          <Caret $c="#888" />
          <Sep />
          <Tool $off $gap={4}>
            <GreyBatch />
            选择楼层
          </Tool>
          <More $ml={18}>»</More>
        </Strip>
      </TopRow>

      <Body>
        <Sidebar>
          <NavHead>
            模块导航栏
            <NavPins>
              <PinIcon />
              <X size={10} strokeWidth={1.3} />
            </NavPins>
          </NavHead>
          <NavBtn>工程设置</NavBtn>
          <NavBtn>绘图输入</NavBtn>
          <NavTools>
            <Plus2 />
            <Plus2 minus />
          </NavTools>
          <TreeBox>
            <FolderRow name="常用构件类型" open />
            <Leaf icon={<GridIcon />} name="轴网(J)" />
            <Leaf icon={<RaftIcon />} name="筏板基础(M)" />
            <Leaf icon={<Column />} name="框柱(Z)" />
            <Leaf icon={<WallIcon />} name="剪力墙(Q)" />
            <Leaf icon={<BeamIcon />} name="梁(L)" />
            <Leaf icon={<SlabIcon />} name="现浇板(B)" />
            <FolderRow name="轴线" />
            <FolderRow name="柱" open />
            <Leaf icon={<Column />} name="框柱(Z)" on />
            <Leaf icon={<Column />} name="暗柱(Z)" />
            <Leaf icon={<Column />} name="端柱(Z)" />
            <Leaf icon={<ConstrIcon />} name="构造柱(Z)" />
            {["墙", "门窗洞", "梁", "板", "基础", "其它", "自定义"].map((n, i) => (
              <FolderRow key={i} name={n} />
            ))}
          </TreeBox>
          <NavBtn $h={22}>单构件输入</NavBtn>
          <NavBtn $h={22}>报表预览</NavBtn>
        </Sidebar>

        <Workspace>
          <ToolRow2>
            <Tool $gap={5}>
              <NewIcon />
              新建
              <Caret $m={0} />
            </Tool>
            <Tool $gap={6}>
              <X size={13} strokeWidth={2.4} color="#333" />
              删除
            </Tool>
            <Tool $gap={5}>
              <Copy size={14} color="#2a5fa8" />
              复制
            </Tool>
            <Tool $gap={4}>
              <RenameIcon />
              重命名
            </Tool>
            <Sep $m={-2} />
            <Tool>楼层</Tool>
            <FloorSelect>
              首层
              <Caret $m={2} />
            </FloorSelect>
            <Sep $m={-2} />
            <Tool $gap={4}>
              <SortIcon />
              排序
              <Caret $m={0} />
            </Tool>
            <Tool $gap={3}>
              <FunnelIcon />
              过滤
              <Caret $m={0} />
            </Tool>
            <Sep $m={-2} />
            <Tool $gap={4}>
              <CopyFromIcon />
              从其他楼层复制构件
            </Tool>
            <Tool $gap={4}>
              <CopyFromIcon />
              复制构件
            </Tool>
          </ToolRow2>

          <Panes>
            <CompPane>
              <SearchRow>
                <SearchInput>搜索构件...</SearchInput>
                <Magnifier />
              </SearchRow>
              <CompList>
                <CompRows>
                  <TreeRow $pl={7}>
                    <Chevron open />
                    <Dash $w={7} />
                    <Column />
                    <TreeLabel>框柱</TreeLabel>
                  </TreeRow>
                  {kzNames.map((n) => (
                    <TreeRow key={n} $pl={30}>
                      <Dash $w={9} />
                      <KzSel $on={n === "KZ-38"}>
                        <Gear />
                        <TreeLabel $ml={7}>{sim(n)}</TreeLabel>
                      </KzSel>
                    </TreeRow>
                  ))}
                </CompRows>
                <Scrollbar $w={16}>
                  <ScrollEnd $h={18}>
                    <SmallChev />
                  </ScrollEnd>
                  <ScrollThumb $h={229} />
                  <ScrollTrack />
                  <ScrollEnd>
                    <SmallChev down />
                  </ScrollEnd>
                </Scrollbar>
              </CompList>
            </CompPane>

            <PropPane>
              <TabRow>
                <Tab>属性编辑</Tab>
              </TabRow>
              <PropBody>
                <TableArea>
                  <Table>
                    <HeadCell />
                    <HeadCell>属性名称</HeadCell>
                    <HeadCell $hot>属性值</HeadCell>
                    <HeadCell>附加</HeadCell>
                    {rows.map((r) => (
                      <React.Fragment key={r.n}>
                        <NumCell $sel={r.sel}>{r.n}</NumCell>
                        <NameCell $sel={r.sel} $c={r.c} $plus={r.plus}>
                          {r.plus && <PlusBox>+</PlusBox>}
                          <span>{sim(r.name)}</span>
                        </NameCell>
                        <ValueCell $sel={r.sel}>{sim(r.v)}</ValueCell>
                        <ExtraCell>{r.chk && <CheckBox />}</ExtraCell>
                      </React.Fragment>
                    ))}
                  </Table>
                </TableArea>
                <Previews>
                  <Preview $h={282} $t={31}>
                    <Canvas $h={244}>
                      <MainSection />
                    </Canvas>
                  </Preview>
                  <Preview $h={282} $t={30}>
                    <Canvas $h={243}>
                      <DimDrawing />
                    </Canvas>
                  </Preview>
                </Previews>
                <Scrollbar>
                  <ScrollEnd $h={20}>
                    <ChevronUp size={12} strokeWidth={3} />
                  </ScrollEnd>
                  <ScrollThumb $h={270} />
                  <ScrollTrack />
                  <ScrollEnd>
                    <SmallChev down />
                  </ScrollEnd>
                </Scrollbar>
              </PropBody>
            </PropPane>
          </Panes>
        </Workspace>
      </Body>

      <StatusBar>
        <StatusCell $w={147} />
        <StatusCell $w={77}>{sim("层高:4.5m")}</StatusCell>
        <StatusCell $w={96}>{sim("底标高:-0.05m")}</StatusCell>
        <StatusCell $w={48}>{sim("0")}</StatusCell>
        <StatusCell>{sim("箍筋肢数不能为空;输入格式:数字*数字;肢数范围在[2,10]之间的整数")}</StatusCell>
        <StatusCell $w={68}>{sim("114.1 FPS")}</StatusCell>
      </StatusBar>

      <Taskbar>
        <StartBtn>
          <WinLogo />
        </StartBtn>
        <SearchBox>
          <Cortana />
          <SearchHint>在这里输入你要搜索的内容</SearchHint>
          <Mic size={17} color="#9a9a9a" strokeWidth={1.4} />
        </SearchBox>
        <TaskIcons>
          <TaskApp $w={48}><TaskView /></TaskApp>
          <TaskApp $w={52}><FanApp /></TaskApp>
          <TaskApp $w={52}><EGlyph $c="#f2f2f2" $s={30}>e</EGlyph></TaskApp>
          <TaskApp $w={46}><SpiralApp /></TaskApp>
          <TaskApp $w={62}><EGlyph $c="#0f7ed8" $s={34}>e</EGlyph></TaskApp>
          <TaskApp $w={34}><IeApp /></TaskApp>
          <TaskApp $w={62}><FolderApp /></TaskApp>
          <TaskApp $w={40} $mr={9} $run><GApp /></TaskApp>
          <TaskApp $w={40} $mr={5} $run><GreenApp /></TaskApp>
          <TaskApp $w={48} $run $active><AppBlue /></TaskApp>
        </TaskIcons>
        <Tray>
          <span>链接</span>
          <CpuBox>
            35%
            <br />
            CPU使用
          </CpuBox>
          <TrayIcon $w={22}><ChevronUp size={15} color="#eee" strokeWidth={1.4} /></TrayIcon>
          <TrayIcon $w={28}><BatteryPlug /></TrayIcon>
          <TrayIcon $w={20}><Wifi size={15} color="#ddd" strokeWidth={1.5} /></TrayIcon>
          <TrayIcon $w={22}><Volume1 size={16} color="#eee" strokeWidth={1.4} /></TrayIcon>
          <TrayIcon $w={34}><Keyboard size={22} color="#eee" strokeWidth={1.2} /></TrayIcon>
          <TrayIcon $w={24}>中</TrayIcon>
          <TrayIcon $w={30}><SogouTray /></TrayIcon>
          <Clock>
            7:32
            <br />
            2018/4/28
          </Clock>
          <TrayIcon $w={52}><MessageSquare size={17} color="#eee" strokeWidth={1.3} /></TrayIcon>
        </Tray>
      </Taskbar>

      <ImeBar>
        <ImeLogo>S</ImeLogo>
        <ImeItem $w={18}><ImeZh>中</ImeZh></ImeItem>
        <ImeItem $w={24}><ImeZh>°,</ImeZh></ImeItem>
        <ImeItem $w={22}><Smile size={17} strokeWidth={2.2} /></ImeItem>
        <ImeItem $w={20}><Mic size={16} fill="#1f5fae" /></ImeItem>
        <ImeItem $w={24}><Keyboard size={18} strokeWidth={2.2} /></ImeItem>
        <ImeItem $w={24}><ImePerson /></ImeItem>
        <ImeItem $w={22}><Shirt size={16} fill="#1f5fae" /></ImeItem>
        <ImeItem $w={20}><Wrench size={15} fill="#1f5fae" /></ImeItem>
      </ImeBar>
      <Badge>61</Badge>
      <RedMark />

      <Dialog>
        <DlgTitle>
          选择箍筋 - [4×4]
          <X size={15} strokeWidth={1.2} color="#111" />
        </DlgTitle>
        <DlgBody>
          <Group $w={418} $h={168}>
            <Legend>箍筋选择</Legend>
            <SelectRow>
              <LeftCol>
                <RadioBox>
                  <Radio>
                    <RadioDot $on />
                    <span>{sim("B边")}</span>
                  </Radio>
                  <Radio>
                    <RadioDot />
                    <span>{sim("H边")}</span>
                  </Radio>
                </RadioBox>
                <Group $w={64} $h={65} $mt={7}>
                  <Legend>肢数</Legend>
                  <LimbSelect>
                    <span>{sim("4")}</span>
                    <SmallChev down />
                  </LimbSelect>
                </Group>
              </LeftCol>
              <StirrupPreview>
                <FourBySection />
              </StirrupPreview>
            </SelectRow>
          </Group>
          <Group $w={418} $h={317} $mt={7}>
            <Legend>箍筋图</Legend>
            <Sunken>
              <Thumbs>
                <Thumb $w={191} $sel>
                  <ThumbOne />
                </Thumb>
                <Thumb $w={194}>
                  <ThumbTwo />
                </Thumb>
              </Thumbs>
              <Instruction>按照图纸要求的形式选择型号</Instruction>
              <ArrowLayer width="393" height="280" viewBox="815 289 393 280">
                <path d="M905 481L985 418" stroke="#f00" strokeWidth="2.500" />
                <rect x="901" y="477" width="8" height="6" fill="#f00" />
                <path d="M995 411l-16 3 7 9z" fill="#f00" />
              </ArrowLayer>
            </Sunken>
          </Group>
          <DlgFoot>
            <DlgBtn $primary>确定</DlgBtn>
            <DlgBtn>取消</DlgBtn>
          </DlgFoot>
        </DlgBody>
      </Dialog>
    </Root>
  );
}
